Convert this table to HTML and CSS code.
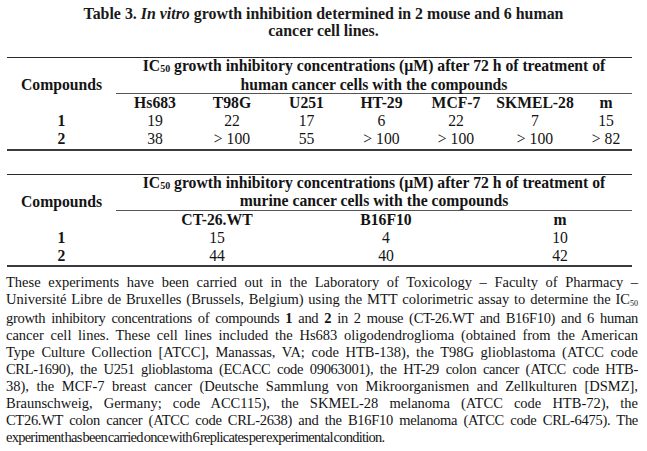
FILE: index.html
```html
<!DOCTYPE html>
<html>
<head>
<meta charset="utf-8">
<link rel="stylesheet" href="styles.css">
</head>
<body>
<div class="page">
  <h1 class="title">Table 3. <i>In vitro</i> growth inhibition determined in 2 mouse and 6 human<br>cancer cell lines.</h1>

  <table class="data t1">
    <colgroup>
      <col class="c-comp">
      <col style="width:78px"><col style="width:76px"><col style="width:73px"><col style="width:77px"><col style="width:72px"><col style="width:86px"><col style="width:54px">
    </colgroup>
    <tr class="top">
      <th rowspan="2" class="comp">Compounds</th>
      <th colspan="7" class="span">IC<sub>50</sub> growth inhibitory concentrations (µM) after 72 h of treatment of<br>human cancer cells with the compounds</th>
    </tr>
    <tr class="names">
      <th>Hs683</th><th>T98G</th><th>U251</th><th>HT-29</th><th>MCF-7</th><th>SKMEL-28</th><th class="pm">m</th>
    </tr>
    <tr><th>1</th><td>19</td><td>22</td><td>17</td><td>6</td><td>22</td><td>7</td><td class="pm">15</td></tr>
    <tr class="last"><th>2</th><td>38</td><td>&gt; 100</td><td>55</td><td>&gt; 100</td><td>&gt; 100</td><td>&gt; 100</td><td class="pm">&gt; 82</td></tr>
  </table>

  <table class="data t2">
    <colgroup>
      <col class="c-comp">
      <col style="width:202px"><col style="width:136px"><col style="width:178px">
    </colgroup>
    <tr class="top">
      <th rowspan="2" class="comp">Compounds</th>
      <th colspan="3" class="span">IC<sub>50</sub> growth inhibitory concentrations (µM) after 72 h of treatment of<br>murine cancer cells with the compounds</th>
    </tr>
    <tr class="names">
      <th>CT-26.WT</th><th>B16F10</th><th class="m2">m</th>
    </tr>
    <tr><th>1</th><td>15</td><td>4</td><td class="m2">10</td></tr>
    <tr class="last"><th>2</th><td>44</td><td>40</td><td class="m2">42</td></tr>
  </table>

  <p class="note">
    <span class="ln">These experiments have been carried out in the Laboratory of Toxicology – Faculty of Pharmacy –</span>
    <span class="ln">Université Libre de Bruxelles (Brussels, Belgium) using the MTT colorimetric assay to determine the IC<sub>50</sub></span>
    <span class="ln tight">growth inhibitory concentrations of compounds <b>1</b> and <b>2</b> in 2 mouse (CT-26.WT and B16F10) and 6 human</span>
    <span class="ln">cancer cell lines. These cell lines included the Hs683 oligodendroglioma (obtained from the American</span>
    <span class="ln">Type Culture Collection [ATCC], Manassas, VA; code HTB-138), the T98G glioblastoma (ATCC code</span>
    <span class="ln tight">CRL-1690), the U251 glioblastoma (ECACC code 09063001), the HT-29 colon cancer (ATCC code HTB-</span>
    <span class="ln">38), the MCF-7 breast cancer (Deutsche Sammlung von Mikroorganismen and Zellkulturen [DSMZ],</span>
    <span class="ln">Braunschweig, Germany; code ACC115), the SKMEL-28 melanoma (ATCC code HTB-72), the</span>
    <span class="ln tight">CT26.WT colon cancer (ATCC code CRL-2638) and the B16F10 melanoma (ATCC code CRL-6475). The</span>
    <span class="ln lastln">experiment has been carried once with 6 replicates per experimental condition.</span>
  </p>
</div>
</body>
</html>
```
FILE: styles.css
```css
html, body {
  margin: 0;
  padding: 0;
  background: #ffffff;
}
body {
  font-family: "Liberation Serif", "Times New Roman", serif;
  color: #141414;
}
.page {
  width: 647px;
  padding-top: 5px;
}
.title {
  margin: 0;
  font-size: 15.9px;
  line-height: 17px;
  font-weight: bold;
  text-align: center;
  color: #1a1a1a;
}
.title i {
  font-style: italic;
}
.data {
  border-collapse: collapse;
  margin-left: 7px;
  width: 625px;
  table-layout: fixed;
  font-size: 15.7px;
}
.t1 { margin-top: 18px; }
.t2 { margin-top: 23px; }
.c-comp { width: 109px; }
.data th, .data td {
  padding: 0;
  text-align: center;
  line-height: 18.2px;
  white-space: nowrap;
}
.data th { font-weight: bold; }
.data td { font-weight: normal; }
.data tr.top th {
  border-top: 1.5px solid #2a2a2a;
}
.data .comp {
  vertical-align: middle;
}
.data .span {
  line-height: 16.5px;
  padding: 0;
  border-bottom: 1px solid #555;
}
.data sub {
  font-size: 10px;
  vertical-align: baseline;
  position: relative;
  top: 1px;
}
.data tr.last th, .data tr.last td {
  border-bottom: 2px solid #3a3a3a;
}
.t1 .pm { padding-left: 2px; }
.t2 .m2 { padding-left: 34px; text-align: center; }
.note {
  margin: 7px 0 0 6px;
  width: 632px;
  font-size: 14.5px;
  line-height: 17px;
  color: #141414;
}
.note .ln {
  display: block;
  text-align: justify;
  text-align-last: justify;
  white-space: nowrap;
}
.note .tight { letter-spacing: -0.3px; }
.note .lastln {
  text-align-last: left;
  letter-spacing: -0.75px;
  word-spacing: -2px;
}
.note sub {
  font-size: 8px;
  vertical-align: baseline;
  position: relative;
  top: 2px;
}
```
